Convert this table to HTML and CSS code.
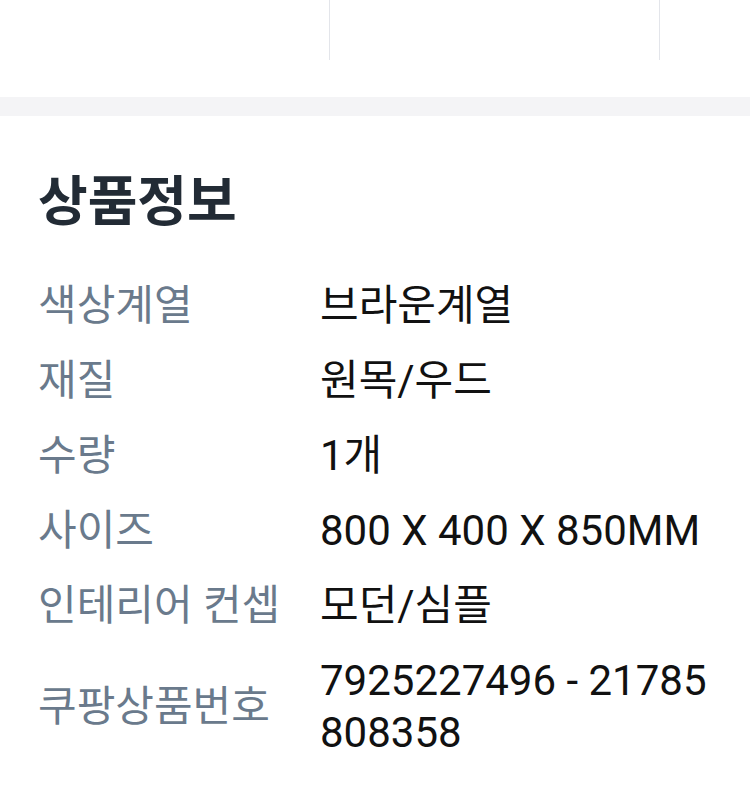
FILE: index.html
```html
<!DOCTYPE html>
<html lang="ko">

<head>
    <meta charset="UTF-8">
    <meta name="viewport" content="width=device-width, initial-scale=1.0">
    <title>상품정보</title>
    <link rel="stylesheet" href="styles.css">
</head>

<body>
    <div class="tabs">
        <div class="tab"></div>
        <div class="tab"></div>
        <div class="tab last"></div>
    </div>
    <div class="band"></div>

    <div class="product-info">
        <h2 class="title">상품정보</h2>
        <div class="spec">
            <div class="row">
                <span class="label">색상계열</span>
                <span class="value">브라운계열</span>
            </div>
            <div class="row">
                <span class="label">재질</span>
                <span class="value">원목/우드</span>
            </div>
            <div class="row">
                <span class="label">수량</span>
                <span class="value">1개</span>
            </div>
            <div class="row">
                <span class="label">사이즈</span>
                <span class="value">800 X 400 X 850MM</span>
            </div>
            <div class="row">
                <span class="label">인테리어 컨셉</span>
                <span class="value">모던/심플</span>
            </div>
            <div class="row">
                <span class="label">쿠팡상품번호</span>
                <span class="value">7925227496 - 21785808358</span>
            </div>
        </div>
    </div>
</body>

</html>
```

FILE: styles.css
```css
body {
    margin: 0;
    background: #fff;
    font-family: Roboto, "Noto Sans CJK KR", sans-serif;
}

.tabs {
    display: flex;
    height: 60px;
    margin-bottom: 37px;
    overflow: hidden;
}

.tabs .tab {
    flex: 0 0 329px;
    border-right: 1px solid #e3e5ea;
}

.tabs .tab.last {
    border-right: none;
}

.band {
    height: 19px;
    background-color: #f4f4f6;
}

.product-info {
    padding: 52px 38px 0 38px;
}

.product-info .title {
    margin: 0;
    font-family: "Noto Sans CJK KR", sans-serif;
    font-size: 54px;
    line-height: 60px;
    font-weight: 700;
    color: #222b35;
}

.product-info .spec {
    padding-top: 40px;
}

.product-info .spec .row {
    display: grid;
    grid-template-columns: 282px 1fr;
    align-items: center;
    padding: 11.5px 0;
    font-size: 42px;
    line-height: 52px;
}

.product-info .spec .label {
    color: #6a7a8c;
    white-space: nowrap;
}

.product-info .spec .value {
    color: #111;
    word-break: break-all;
}
```
